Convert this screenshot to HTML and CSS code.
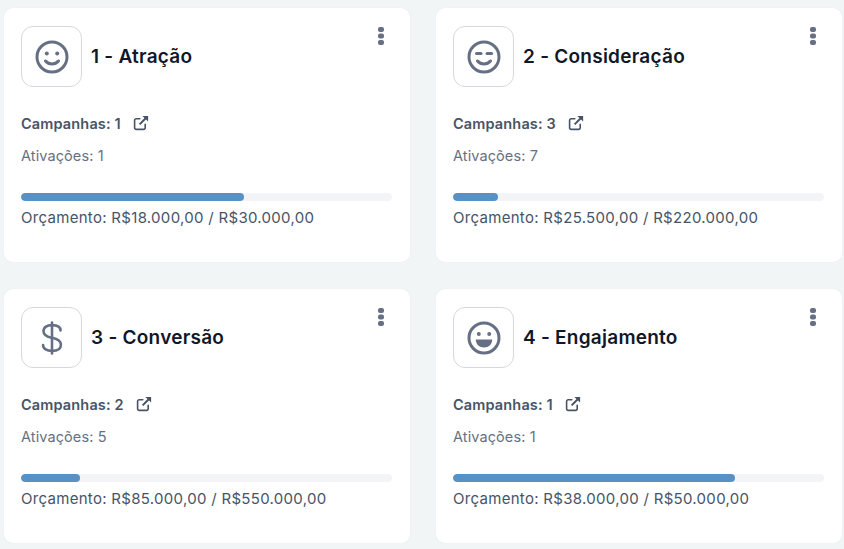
FILE: index.html
```html
<!DOCTYPE html>
<html lang="pt-BR">
<head>
<meta charset="utf-8">
<title>Etapas</title>
<link rel="stylesheet" href="styles.css">
</head>
<body>
<svg class="defs" width="0" height="0" aria-hidden="true">
  <symbol id="ext" viewBox="0 0 16 16">
    <path d="M12.2 9.2v3.6a1.6 1.6 0 0 1-1.6 1.6H3.2a1.6 1.6 0 0 1-1.6-1.6V5.4a1.6 1.6 0 0 1 1.6-1.6h3.6" fill="none" stroke="currentColor" stroke-width="1.6" stroke-linecap="round"/>
    <path d="M6.6 9.4 13 3" fill="none" stroke="currentColor" stroke-width="2"/>
    <path d="M9.4 .9h5.7v5.7z" fill="currentColor"/>
  </symbol>
  <symbol id="dots" viewBox="0 0 6 18">
    <rect y="0" width="6" height="5" rx="2" fill="currentColor"/>
    <rect y="6.5" width="6" height="5" rx="2" fill="currentColor"/>
    <rect y="13" width="6" height="5" rx="2" fill="currentColor"/>
  </symbol>
</svg>
<main class="grid">
  <section class="card">
    <div class="head">
      <div class="icon-box">
        <svg class="face" viewBox="0 0 34 34"><circle cx="17" cy="17" r="15" class="ln"/><circle cx="11.8" cy="13.5" r="2" class="fl"/><circle cx="22.2" cy="13.5" r="2" class="fl"/><path d="M10.5 21c3.4 4 9.6 4 13 0" class="ln"/></svg>
      </div>
      <h2>1 - Atração</h2>
      <svg class="menu"><use href="#dots"/></svg>
    </div>
    <p class="camp">Campanhas: 1 <svg class="ext"><use href="#ext"/></svg></p>
    <p class="ativ">Ativações: 1</p>
    <div class="track"><div class="fill" style="width:60%"></div></div>
    <p class="orc">Orçamento: R$18.000,00 / R$30.000,00</p>
  </section>
  <section class="card">
    <div class="head">
      <div class="icon-box">
        <svg class="face" viewBox="0 0 34 34"><circle cx="17" cy="17" r="15" class="ln"/><path d="M9.5 13.5h4.6M20 13.5h4.6" class="ln"/><path d="M10.5 21c3.4 4 9.6 4 13 0" class="ln"/></svg>
      </div>
      <h2>2 - Consideração</h2>
      <svg class="menu"><use href="#dots"/></svg>
    </div>
    <p class="camp">Campanhas: 3 <svg class="ext"><use href="#ext"/></svg></p>
    <p class="ativ">Ativações: 7</p>
    <div class="track"><div class="fill" style="width:12%"></div></div>
    <p class="orc">Orçamento: R$25.500,00 / R$220.000,00</p>
  </section>
  <section class="card">
    <div class="head">
      <div class="icon-box">
        <svg class="dollar" viewBox="0 0 24 34"><path d="M12 1.5v31" class="ln"/><path d="M20.5 9.5c0-3.6-3.6-5.4-8.5-5.4S3.5 6.2 3.5 10.2c0 4 3.6 5.6 8.5 6.6s8.9 2.6 8.9 6.9-3.9 6.2-8.9 6.2-8.9-2-8.9-5.9" class="ln"/></svg>
      </div>
      <h2>3 - Conversão</h2>
      <svg class="menu"><use href="#dots"/></svg>
    </div>
    <p class="camp">Campanhas: 2 <svg class="ext"><use href="#ext"/></svg></p>
    <p class="ativ">Ativações: 5</p>
    <div class="track"><div class="fill" style="width:16%"></div></div>
    <p class="orc">Orçamento: R$85.000,00 / R$550.000,00</p>
  </section>
  <section class="card">
    <div class="head">
      <div class="icon-box">
        <svg class="face" viewBox="0 0 34 34"><circle cx="17" cy="17" r="15" class="ln"/><circle cx="11.8" cy="13" r="2" class="fl"/><circle cx="22.2" cy="13" r="2" class="fl"/><path d="M8.8 18.6h16.4c0 5-3.6 8-8.2 8s-8.2-3-8.2-8z" class="fl"/></svg>
      </div>
      <h2>4 - Engajamento</h2>
      <svg class="menu"><use href="#dots"/></svg>
    </div>
    <p class="camp">Campanhas: 1 <svg class="ext"><use href="#ext"/></svg></p>
    <p class="ativ">Ativações: 1</p>
    <div class="track"><div class="fill" style="width:76%"></div></div>
    <p class="orc">Orçamento: R$38.000,00 / R$50.000,00</p>
  </section>
</main>
</body>
</html>
```
FILE: styles.css
```css
* { box-sizing: border-box; }
html, body { margin: 0; height: 100%; }
body {
  background: #f2f5f6;
  font-family: "Inter", "Noto Sans", sans-serif;
  overflow: hidden;
}
.defs { display: block; height: 0; }
.grid {
  display: grid;
  grid-template-columns: 406px 406px;
  grid-auto-rows: 254px;
  column-gap: 26px;
  row-gap: 27px;
  padding: 8px 2px 0 4px;
}
.card {
  background: #fff;
  border-radius: 9px;
  padding: 18px 18px 0 17px;
  box-shadow: 0 0 1px rgba(120, 130, 140, .15);
}
.head { display: flex; align-items: center; gap: 9px; position: relative; }
.icon-box {
  width: 61px;
  height: 61px;
  border: 1px solid #d5d8e1;
  border-radius: 12px;
  display: flex;
  align-items: center;
  justify-content: center;
  flex: none;
}
.face { width: 34px; height: 34px; }
.dollar { width: 24px; height: 34px; }
.ln { fill: none; stroke: #667085; stroke-width: 3; stroke-linecap: round; stroke-linejoin: round; }
.dollar .ln { stroke-width: 2.6; }
.fl { fill: #667085; }
h2 {
  margin: 0;
  font-size: 19px;
  line-height: 24px;
  font-weight: 600;
  letter-spacing: .25px;
  color: #101828;
}
.menu { position: absolute; right: 8px; top: 1px; width: 6px; height: 18px; color: #667085; }
p { margin: 0; }
.camp {
  margin-top: 26px;
  font-size: 14.5px;
  line-height: 22px;
  font-weight: 600;
  letter-spacing: .15px;
  color: #475467;
  display: flex;
  align-items: center;
  white-space: pre;
}
.ext { width: 16px; height: 16px; margin-left: 8px; margin-top: -3px; color: #475467; }
.ativ {
  margin-top: 10px;
  font-size: 14.5px;
  line-height: 22px;
  letter-spacing: .1px;
  color: #667085;
}
.track {
  margin-top: 26px;
  height: 8px;
  width: 371px;
  border-radius: 4px;
  background: #f2f4f7;
  overflow: hidden;
}
.fill { height: 100%; border-radius: 4px; background: #5891c5; }
.orc {
  margin-top: 5px;
  font-size: 15px;
  line-height: 24px;
  letter-spacing: .3px;
  color: #475467;
  white-space: nowrap;
}
```
